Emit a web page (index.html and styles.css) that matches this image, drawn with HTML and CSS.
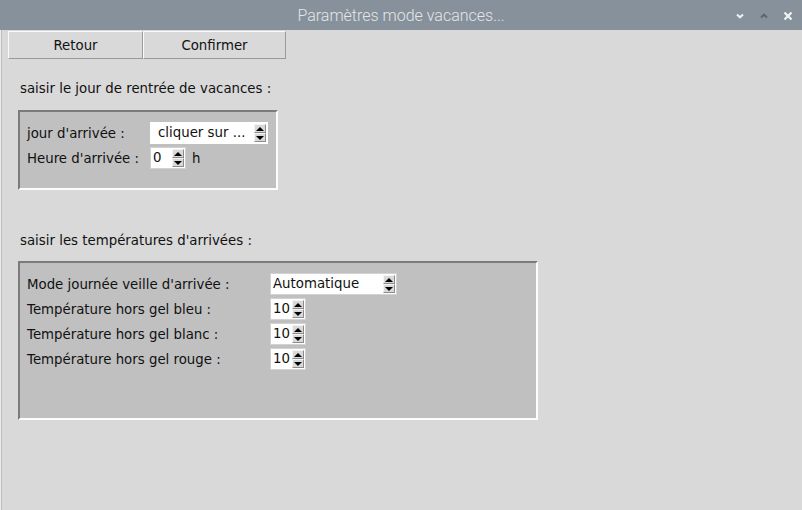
FILE: index.html
```html
<!DOCTYPE html>
<html lang="fr">
<head>
<meta charset="utf-8">
<title>Paramètres mode vacances...</title>
<link rel="stylesheet" href="styles.css">
</head>
<body>
<div class="titlebar">
  <div class="title">Paramètres mode vacances...</div>
  <div class="controls">
    <svg class="ctl" width="10" height="8" viewBox="0 0 10 8"><path d="M2 2.5 L5 5.3 L8 2.5" fill="none" stroke="#eef0f2" stroke-width="2"/></svg>
    <svg class="ctl" width="10" height="8" viewBox="0 0 10 8"><path d="M2 5.5 L5 2.7 L8 5.5" fill="none" stroke="#5d6670" stroke-width="2"/></svg>
    <svg class="ctl" width="10" height="10" viewBox="0 0 10 10"><path d="M1.5 1.5 L8.5 8.5 M8.5 1.5 L1.5 8.5" fill="none" stroke="#f2f4f5" stroke-width="2.2"/></svg>
  </div>
</div>
<div class="window">
  <div class="toolbar">
    <button class="btn btn-retour">Retour</button>
    <button class="btn btn-confirm">Confirmer</button>
  </div>
  <div class="section">
    <div class="heading h1">saisir le jour de rentrée de vacances :</div>
    <div class="frame frame1">
      <div class="row">
        <span class="lbl">jour d'arrivée :</span>
        <div class="spin spin-day"><span class="val pad">cliquer sur ...</span><span class="arrows"><span class="ab up"></span><span class="ab dn"></span></span></div>
      </div>
      <div class="row">
        <span class="lbl">Heure d'arrivée :</span>
        <div class="spin spin-num"><span class="val">0</span><span class="arrows"><span class="ab up"></span><span class="ab dn"></span></span></div>
        <span class="unit">h</span>
      </div>
    </div>
    <div class="heading h2">saisir les températures d'arrivées :</div>
    <div class="frame frame2">
      <div class="row">
        <span class="lbl">Mode journée veille d'arrivée :</span>
        <div class="spin spin-mode"><span class="val">Automatique</span><span class="arrows"><span class="ab up"></span><span class="ab dn"></span></span></div>
      </div>
      <div class="row">
        <span class="lbl">Température hors gel bleu :</span>
        <div class="spin spin-num"><span class="val">10</span><span class="arrows"><span class="ab up"></span><span class="ab dn"></span></span></div>
      </div>
      <div class="row">
        <span class="lbl">Température hors gel blanc :</span>
        <div class="spin spin-num"><span class="val">10</span><span class="arrows"><span class="ab up"></span><span class="ab dn"></span></span></div>
      </div>
      <div class="row">
        <span class="lbl">Température hors gel rouge :</span>
        <div class="spin spin-num"><span class="val">10</span><span class="arrows"><span class="ab up"></span><span class="ab dn"></span></span></div>
      </div>
    </div>
  </div>
</div>
</body>
</html>
```
FILE: styles.css
```css
html, body {
  margin: 0;
  padding: 0;
  height: 100%;
}
body {
  background: #d9d9d9;
  font-family: "DejaVu Sans", sans-serif;
  font-size: 13.33px;
  color: #111;
  overflow: hidden;
}
.titlebar {
  height: 30px;
  background: #87919b;
  display: flex;
  align-items: center;
  justify-content: center;
  position: relative;
}
.title {
  font-family: Roboto, "Liberation Sans", sans-serif;
  font-weight: 300;
  font-size: 16px;
  color: #e4e6e8;
}
.controls {
  position: absolute;
  right: 9px;
  top: 11px;
  display: flex;
  gap: 14px;
  align-items: center;
}
.window {
  height: 480px;
  border-left: 1px solid #ececec;
  box-shadow: inset 1px 0 0 #bdbdbd;
  padding-left: 7px;
}
.toolbar {
  display: flex;
  padding-top: 1px;
}
.btn {
  height: 28px;
  margin: 0;
  padding: 0;
  background: #d9d9d9;
  border-style: solid;
  border-width: 1px;
  border-color: #fafafa #9a9a9a #9a9a9a #fafafa;
  font-family: "DejaVu Sans", sans-serif;
  font-size: 13.33px;
  color: #111;
}
.btn-retour { width: 135px; }
.btn-confirm { width: 143px; }
.section {
  padding-left: 10px;
}
.heading {
  line-height: 16px;
  padding-left: 2px;
}
.h1 { margin-top: 22px; margin-bottom: 13px; }
.h2 { margin-top: 43px; margin-bottom: 12px; }
.frame {
  background: #c0c0c0;
  border-style: solid;
  border-width: 2px;
  border-color: #7b7b7b #fdfdfd #fdfdfd #7b7b7b;
  box-sizing: border-box;
  padding: 10px 0 0 7px;
  display: flex;
  flex-direction: column;
  gap: 3px;
}
.frame1 { width: 260px; height: 80px; }
.frame2 { width: 520px; height: 159px; }
.frame1 .lbl { width: 123px; }
.frame2 .lbl { width: 243px; }
.row {
  display: flex;
  align-items: center;
  height: 22px;
}
.lbl {
  flex: none;
  white-space: nowrap;
}
.unit { margin-left: 6px; }
.spin {
  height: 22px;
  box-sizing: border-box;
  background: #fff;
  border: 1px solid #d2d2d2;
  display: flex;
  align-items: stretch;
}
.spin-day { width: 118px; border-color: #fff; }
.spin-num { width: 36px; }
.spin-mode { width: 127px; }
.val {
  flex: 1;
  line-height: 20px;
  padding-left: 2px;
  white-space: nowrap;
  overflow: hidden;
}
.val.pad { padding-left: 7px; }
.arrows {
  width: 12px;
  display: flex;
  flex-direction: column;
  padding: 1px 1px 1px 0;
}
.ab {
  flex: 1;
  background: #d9d9d9;
  border-style: solid;
  border-width: 1px;
  border-color: #f4f4f4 #8c8c8c #8c8c8c #f4f4f4;
  display: flex;
  align-items: center;
  justify-content: center;
}
.ab::before {
  content: "";
  width: 0;
  height: 0;
  border-left: 4px solid transparent;
  border-right: 4px solid transparent;
}
.up::before { border-bottom: 4px solid #000; }
.dn::before { border-top: 4px solid #000; }
```
